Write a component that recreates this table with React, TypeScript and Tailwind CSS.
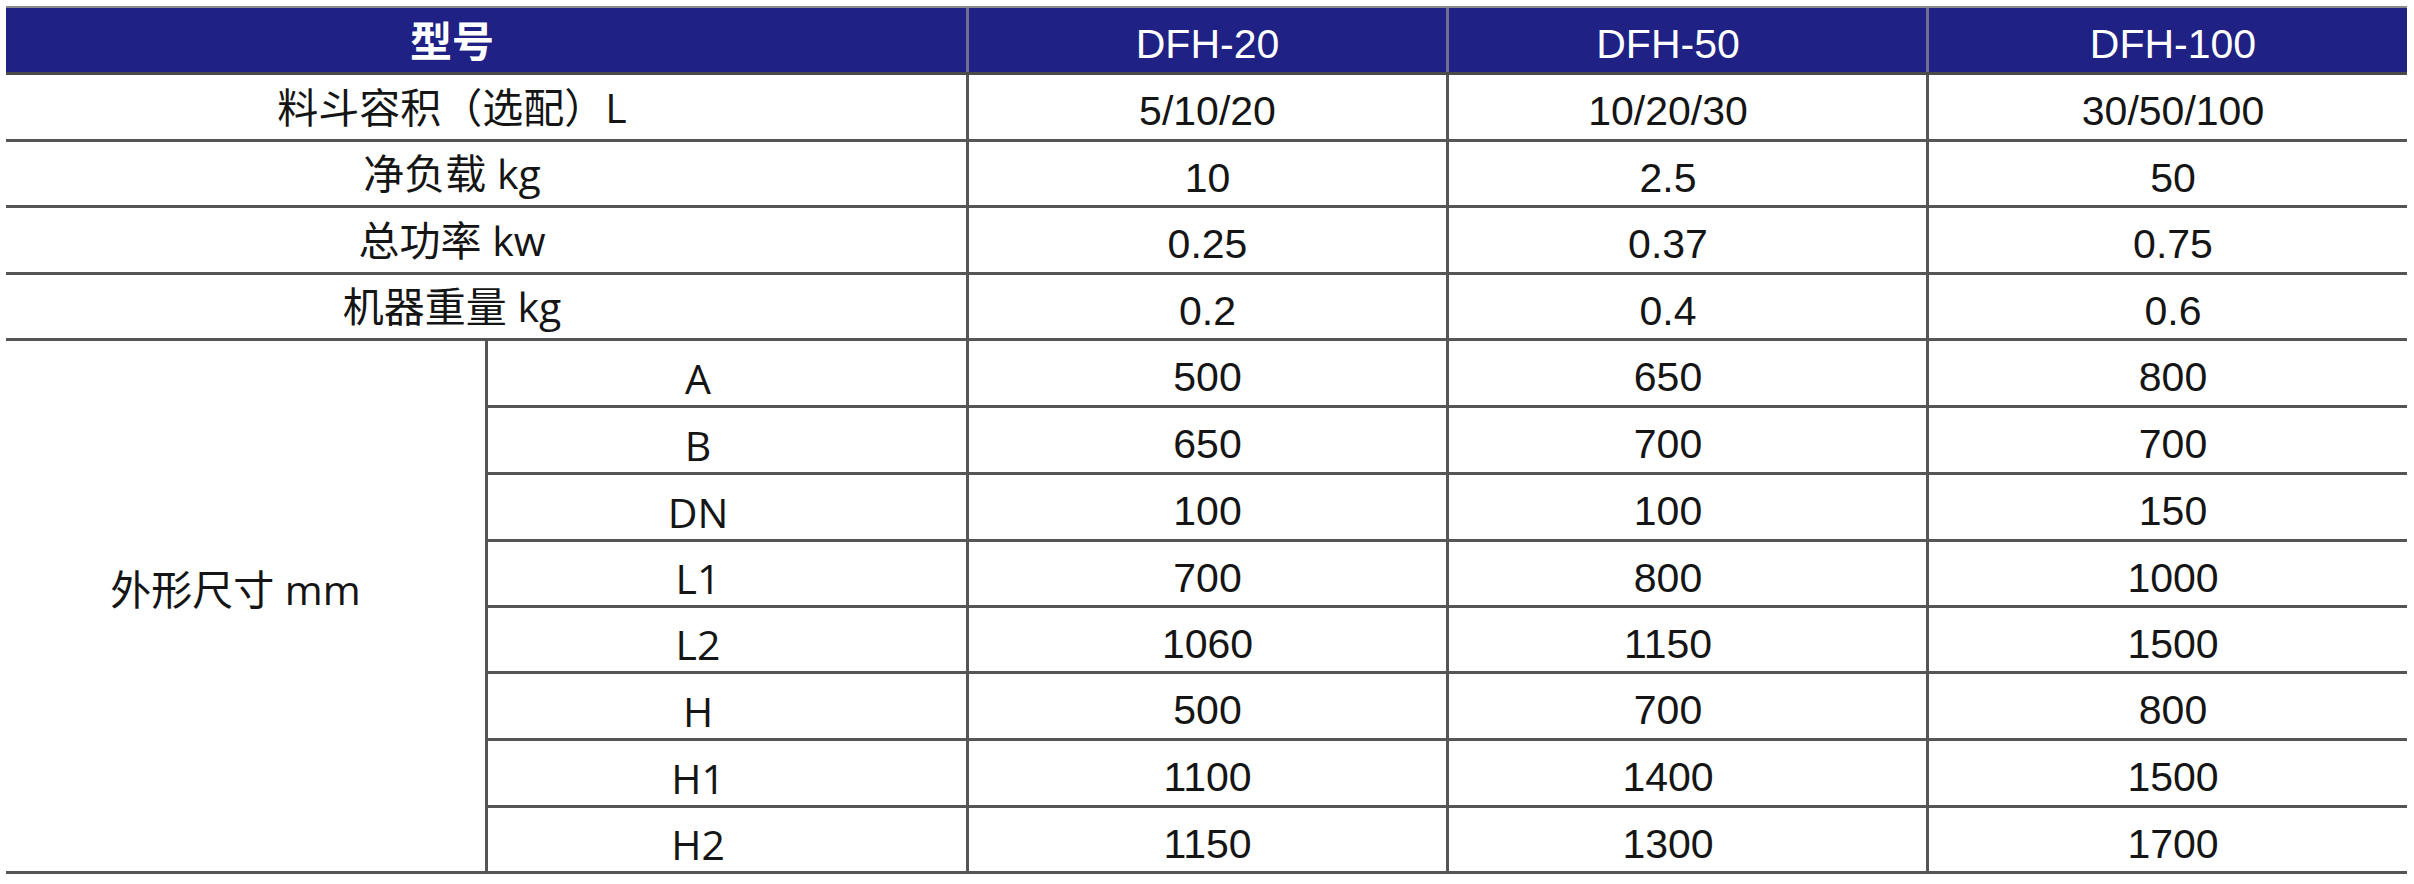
const CJK = "font-['Open_Sans','Noto_Sans_CJK_SC',sans-serif]"
const NUM = "font-['Liberation_Sans',Arial,sans-serif]"

const models = ["DFH-20", "DFH-50", "DFH-100"]

const specRows = [
  { label: "料斗容积（选配）L", values: ["5/10/20", "10/20/30", "30/50/100"], h: "h-[67px]" },
  { label: "净负载 kg", values: ["10", "2.5", "50"], h: "h-[66px]" },
  { label: "总功率 kw", values: ["0.25", "0.37", "0.75"], h: "h-[67px]" },
  { label: "机器重量 kg", values: ["0.2", "0.4", "0.6"], h: "h-[66px]" },
]

const dimRows = [
  { label: "A", values: ["500", "650", "800"], h: "h-[67px]" },
  { label: "B", values: ["650", "700", "700"], h: "h-[67px]" },
  { label: "DN", values: ["100", "100", "150"], h: "h-[67px]" },
  { label: "L1", values: ["700", "800", "1000"], h: "h-[66px]" },
  { label: "L2", values: ["1060", "1150", "1500"], h: "h-[66px]" },
  { label: "H", values: ["500", "700", "800"], h: "h-[67px]" },
  { label: "H1", values: ["1100", "1400", "1500"], h: "h-[67px]" },
  { label: "H2", values: ["1150", "1300", "1700"], h: "h-[66px]" },
]

// small nudges so each column's text sits where the reference has it
const valueCell = [
  "pr-[0px]",
  "pr-[39px]",
  "pl-[10px]",
]

function ValueCells({ values }: { values: string[] }) {
  return (
    <>
      {values.map((v, i) => (
        <div
          key={i}
          className={`flex items-center justify-center border-l-[3px] border-[#555] pt-[9px] text-[41px] leading-none text-[#151515] ${NUM} ${valueCell[i]}`}
        >
          {v}
        </div>
      ))}
    </>
  )
}

export default function App() {
  return (
    <div className="min-h-screen bg-white pl-[6px] pt-[6px]">
      <div className="w-[2401px] border-t-2 border-[#8a8a8a]">
        {/* header */}
        <div className="grid h-[67px] grid-cols-[960px_480px_480px_481px] border-b-[3px] border-[#4a4a4a] bg-[#1f2184]">
          <div className={`flex items-center justify-center pr-[68px] text-[42px] font-bold text-white ${CJK}`}>
            型号
          </div>
          {models.map((m, i) => (
            <div
              key={m}
              className={`flex items-center justify-center border-l-[3px] border-[#6f6f8f] pt-[8px] text-[41px] leading-none text-white ${NUM} ${valueCell[i]}`}
            >
              {m}
            </div>
          ))}
        </div>

        {/* general specs */}
        {specRows.map((row) => (
          <div
            key={row.label}
            className={`grid grid-cols-[960px_480px_480px_481px] border-b-[3px] border-[#555] ${row.h}`}
          >
            <div className={`flex items-center justify-center pr-[68px] text-[41px] leading-none text-[#151515] ${CJK}`}>
              {row.label}
            </div>
            <ValueCells values={row.values} />
          </div>
        ))}

        {/* dimensions */}
        <div className="flex">
          <div
            className={`flex w-[482px] shrink-0 items-center justify-center border-r-[3px] border-b-[3px] border-[#555] pb-[34px] pr-[20px] text-[41px] leading-none text-[#151515] ${CJK}`}
          >
            外形尺寸 mm
          </div>
          <div className="flex flex-1 flex-col">
            {dimRows.map((row) => (
              <div
                key={row.label}
                className={`grid grid-cols-[478px_480px_480px_481px] border-b-[3px] border-[#555] ${row.h}`}
              >
                <div
                  className={`flex items-center justify-center pr-[58px] pt-[10px] text-[41px] leading-none text-[#151515] ${CJK}`}
                >
                  {row.label}
                </div>
                <ValueCells values={row.values} />
              </div>
            ))}
          </div>
        </div>
      </div>
    </div>
  )
}
